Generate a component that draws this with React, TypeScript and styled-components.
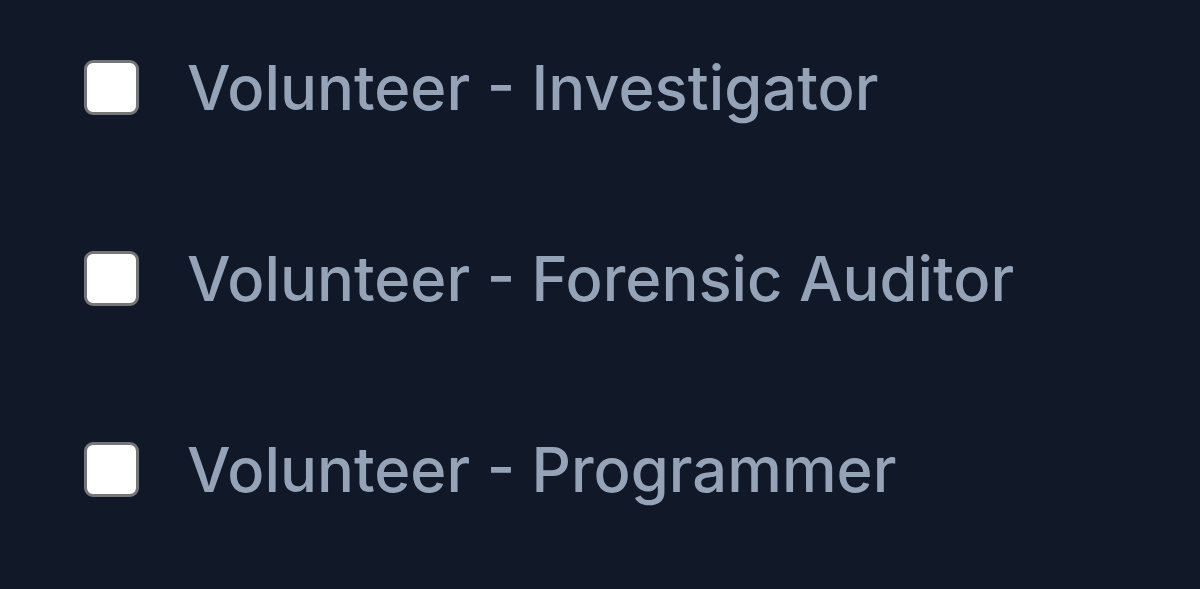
import React from "react";
import styled, { createGlobalStyle } from "styled-components";

const Global = createGlobalStyle`
  html, body { margin: 0; padding: 0; background: #111827; }
  body { font-family: Inter, "Noto Sans", sans-serif; }
`;

const Page = styled.div`
  width: 1200px;
  height: 589px;
  background: #111827;
  box-sizing: border-box;
  padding: 60px 0 0 84px;
  display: flex;
  flex-direction: column;
  gap: 136px;
`;

const Row = styled.label`
  display: flex;
  align-items: center;
  gap: 48px;
  height: 55px;
  cursor: pointer;
`;

const Box = styled.input.attrs({ type: "checkbox" })`
  appearance: none;
  margin: 0;
  width: 55px;
  height: 55px;
  box-sizing: border-box;
  background: #ffffff;
  border: 3px solid #767676;
  border-radius: 9px;
  flex: none;
`;

const Text = styled.span`
  font-family: Inter, "Noto Sans", sans-serif;
  font-size: 61.5px;
  font-weight: 500;
  color: #94a3b8;
  line-height: 1;
  white-space: nowrap;
`;

const items = [
  "Volunteer - Investigator",
  "Volunteer - Forensic Auditor",
  "Volunteer - Programmer",
];

export default function App() {
  return (
    <>
      <Global />
      <Page>
        {items.map((t) => (
          <Row key={t}>
            <Box />
            <Text>{t}</Text>
          </Row>
        ))}
      </Page>
    </>
  );
}
